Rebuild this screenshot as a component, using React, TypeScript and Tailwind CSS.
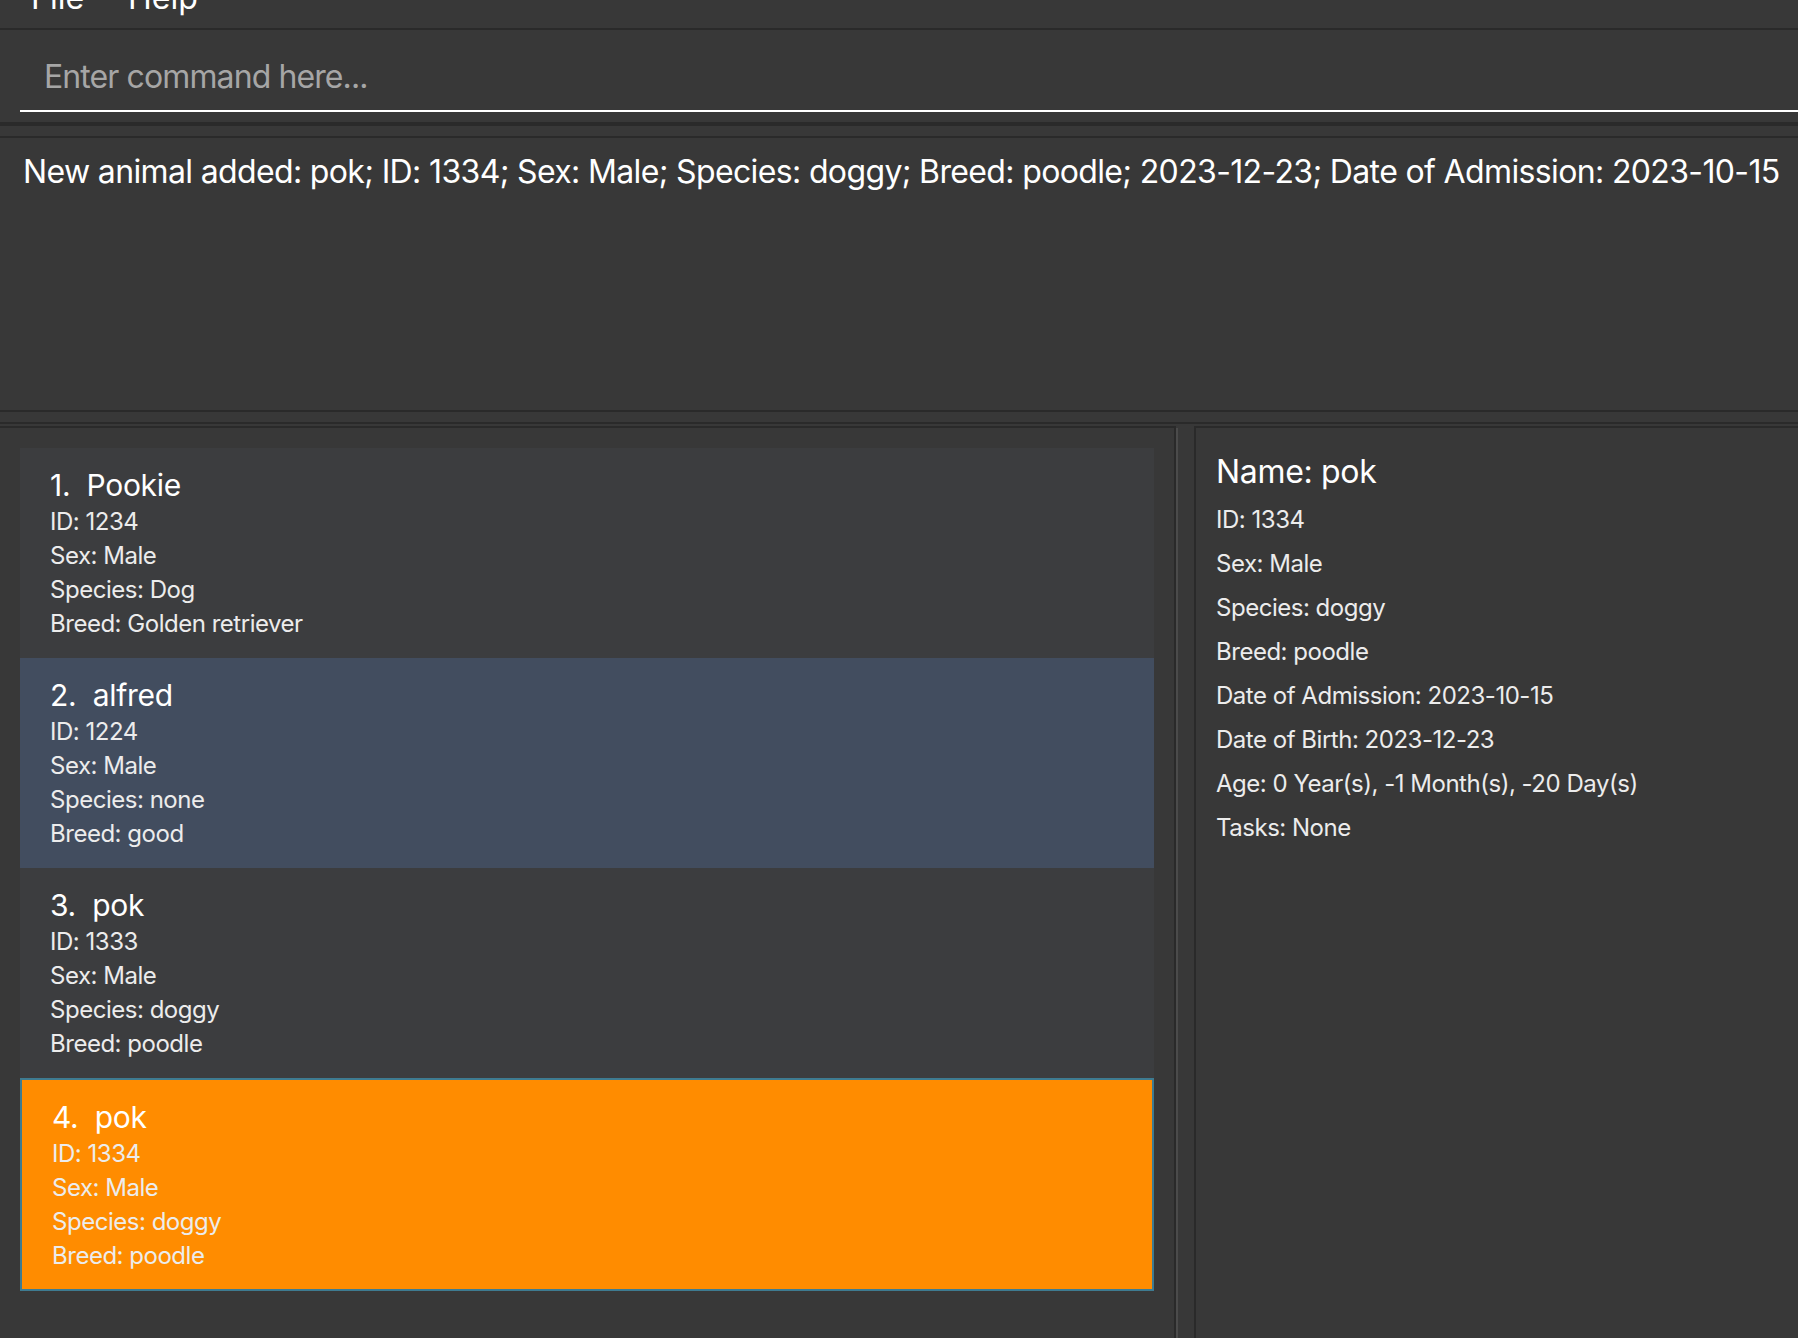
import React from "react";

type Animal = {
  index: number;
  name: string;
  id: string;
  sex: string;
  species: string;
  breed: string;
  tone: "plain" | "hover" | "picked";
};

const animals: Animal[] = [
  { index: 1, name: "Pookie", id: "1234", sex: "Male", species: "Dog", breed: "Golden retriever", tone: "plain" },
  { index: 2, name: "alfred", id: "1224", sex: "Male", species: "none", breed: "good", tone: "hover" },
  { index: 3, name: "pok", id: "1333", sex: "Male", species: "doggy", breed: "poodle", tone: "plain" },
  { index: 4, name: "pok", id: "1334", sex: "Male", species: "doggy", breed: "poodle", tone: "picked" },
];

const details = [
  "ID: 1334",
  "Sex: Male",
  "Species: doggy",
  "Breed: poodle",
  "Date of Admission: 2023-10-15",
  "Date of Birth: 2023-12-23",
  "Age: 0 Year(s), -1 Month(s), -20 Day(s)",
  "Tasks: None",
];

function AnimalCard({ animal }: { animal: Animal }) {
  const tone =
    animal.tone === "picked"
      ? "bg-[#ff8c00] border-2 border-[#3e7b91] pl-[30px] pb-[16px]"
      : animal.tone === "hover"
        ? "bg-[#424d5f] pl-[30px] pb-[17px]"
        : "bg-[#3c3d3f] pl-[30px] pb-[17px]";

  return (
    <div className={`${tone} pt-[20px] flex flex-col`}>
      <div className="text-[30px] leading-[35px] text-white whitespace-pre tracking-[-0.01em]">
        {animal.index}.{"  "}
        {animal.name}
      </div>
      <div className="mt-[2px] text-[24px] leading-[34px] text-[#ececec] tracking-[-0.02em]">
        <div>ID: {animal.id}</div>
        <div>Sex: {animal.sex}</div>
        <div>Species: {animal.species}</div>
        <div>Breed: {animal.breed}</div>
      </div>
    </div>
  );
}

export default function App() {
  return (
    <div className="w-[1798px] h-[1338px] overflow-hidden bg-[#383838] text-white flex flex-col font-['Inter','Liberation_Sans',sans-serif]">
      {/* menu bar, scrolled partly off the top */}
      <div className="h-[30px] shrink-0 overflow-hidden border-b-2 border-[#2a2a2a]">
        <div className="-mt-[22px] flex text-[32px] leading-[40px] pl-[31px] gap-[44px]">
          <span>File</span>
          <span>Help</span>
        </div>
      </div>

      {/* command box */}
      <div className="h-[96px] shrink-0 flex flex-col justify-end pb-[10px] pl-[20px] border-b-4 border-[#2a2a2a]">
        <div className="border-b-2 border-white pl-[24px] pb-[13px] text-[32px] leading-[40px] text-[#a6a6a6] tracking-[-0.028em]">
          Enter command here...
        </div>
      </div>

      <div className="h-[10px] shrink-0" />

      {/* result display */}
      <div className="h-[276px] shrink-0 border-t-2 border-b-2 border-[#2a2a2a] pl-[23px] pt-[14px]">
        <div className="text-[32px] leading-[40px] whitespace-nowrap tracking-[-0.02em]">
          New animal added: pok; ID: 1334; Sex: Male; Species: doggy; Breed: poodle; 2023-12-23; Date of Admission: 2023-10-15
        </div>
      </div>

      <div className="h-[12px] shrink-0 border-b-2 border-[#2a2a2a]" />
      <div className="h-[2px] shrink-0" />

      {/* list + detail */}
      <div className="flex-1 flex min-h-0">
        <div className="w-[1176px] shrink-0 border-t-2 border-r-2 border-[#2a2a2a] px-[20px] pt-[20px] flex flex-col">
          {animals.map((a) => (
            <AnimalCard key={a.index} animal={a} />
          ))}
        </div>
        <div className="w-[2px] shrink-0 bg-[#4b4b4b] mt-[2px]" />
        <div className="w-[16px] shrink-0" />
        <div className="flex-1 border-t-2 border-l-2 border-[#2a2a2a] pl-[20px] pt-[21px]">
          <div className="text-[32px] leading-[46px] mb-[3px] tracking-[-0.01em]">Name: pok</div>
          <div className="text-[24px] leading-[44px] text-[#ececec] tracking-[-0.02em]">
            {details.map((d) => (
              <div key={d}>{d}</div>
            ))}
          </div>
        </div>
      </div>
    </div>
  );
}
